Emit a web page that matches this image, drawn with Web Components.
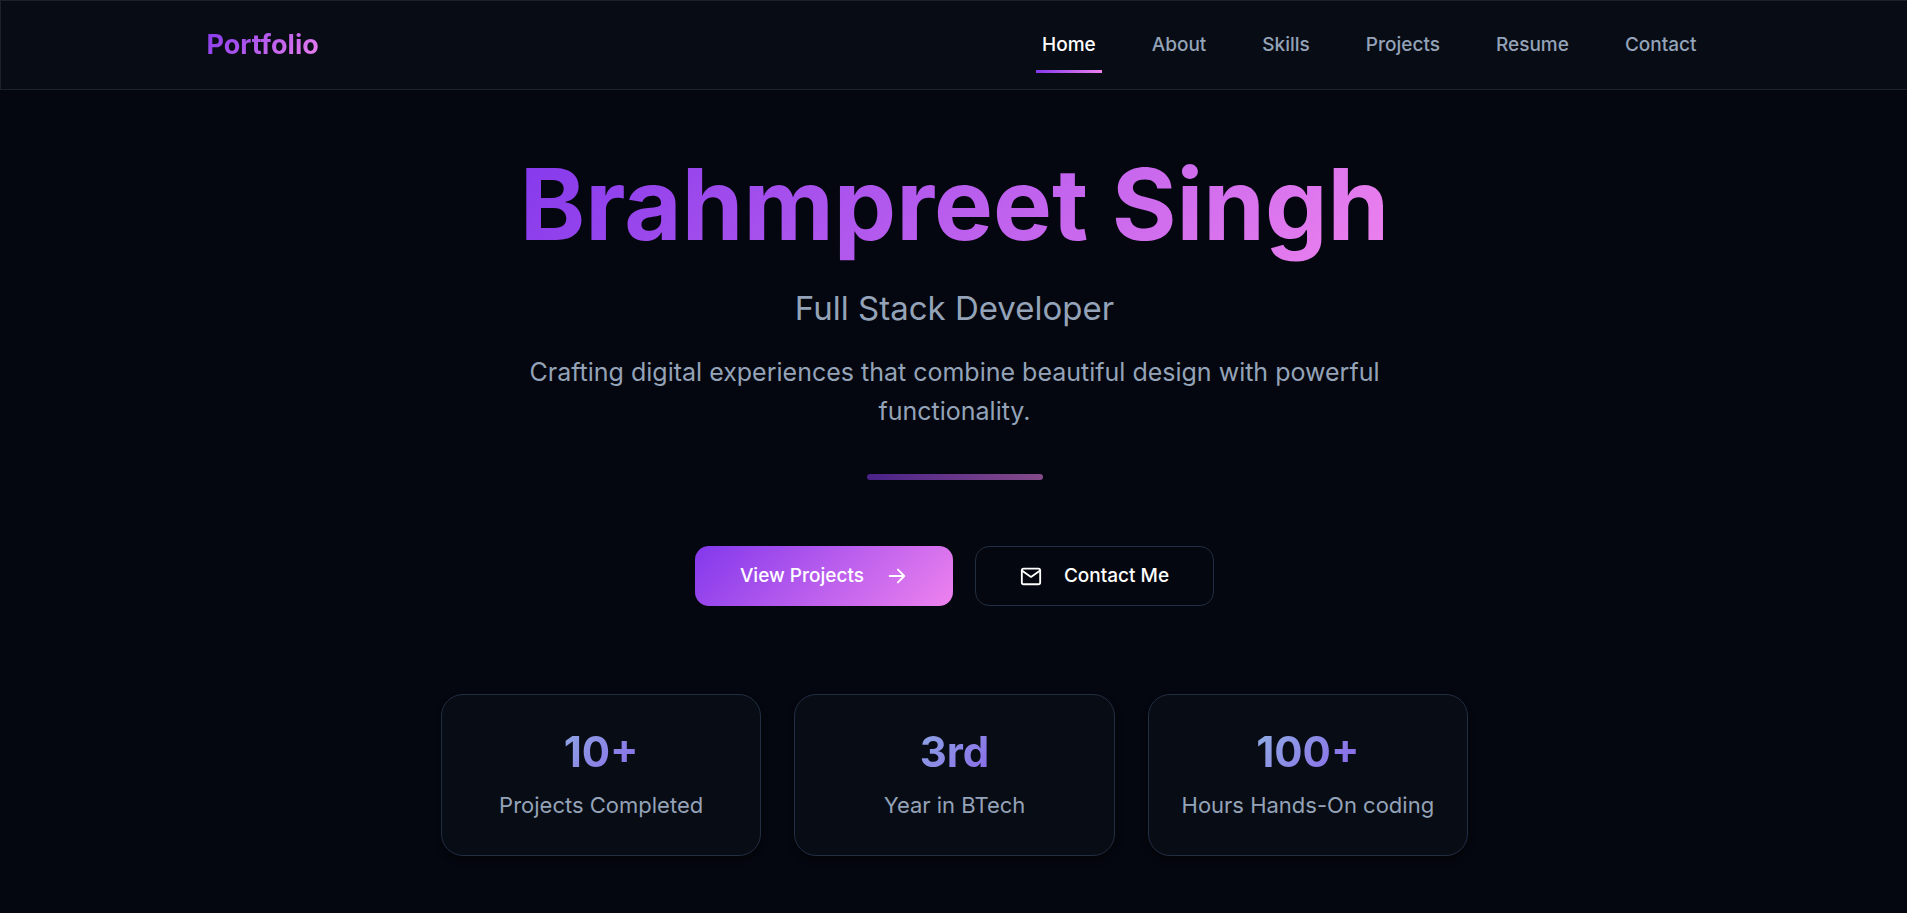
<!DOCTYPE html>
<html lang="en">
<head>
<meta charset="utf-8">
<title>Portfolio</title>
<style>
  html { background: #04070f; }
  body {
    margin: 0;
    background: #04070f;
    color: #94a3b8;
    font-family: Inter, "Liberation Sans", sans-serif;
    --accent: linear-gradient(135deg, #8338ec, #ee82ee);
    --accent-flat: linear-gradient(90deg, #8338ec, #ee82ee);
    --cool: linear-gradient(135deg, #94d8e0, #8338ec);
    --surface: #080c15;
    --line: #222e42;
    --light: #ffffff;
    --muted: #94a3b8;
  }
</style>
</head>
<body>
<site-header>
  <nav-link href="#home" current>Home</nav-link>
  <nav-link href="#about">About</nav-link>
  <nav-link href="#skills">Skills</nav-link>
  <nav-link href="#projects">Projects</nav-link>
  <nav-link href="#resume">Resume</nav-link>
  <nav-link href="#contact">Contact</nav-link>
</site-header>
<hero-section>
  <span slot="name">Brahmpreet Singh</span>
  <span slot="role">Full Stack Developer</span>
  <span slot="intro">Crafting digital experiences that combine beautiful design with powerful functionality.</span>
  <action-button slot="actions" variant="primary">View Projects
    <svg slot="after" width="22" height="22" viewBox="0 0 24 24" fill="none" stroke="currentColor" stroke-width="2" stroke-linecap="round" stroke-linejoin="round" aria-hidden="true"><path d="M4 12h16M13 5l7 7-7 7"/></svg>
  </action-button>
  <action-button slot="actions">
    <svg slot="before" width="22" height="22" viewBox="0 0 24 24" fill="none" stroke="currentColor" stroke-width="2" stroke-linecap="round" stroke-linejoin="round" aria-hidden="true"><rect x="2" y="4" width="20" height="17" rx="2"/><path d="M22 6l-10 7L2 6"/></svg>
    Contact Me
  </action-button>
  <stat-card slot="stats" value="10+">Projects Completed</stat-card>
  <stat-card slot="stats" value="3rd">Year in BTech</stat-card>
  <stat-card slot="stats" value="100+">Hours Hands-On coding</stat-card>
</hero-section>

<script>
  const define = (name, html, setup) => {
    const template = document.createElement('template');
    template.innerHTML = html;
    customElements.define(name, class extends HTMLElement {
      constructor() {
        super();
        this.attachShadow({ mode: 'open' }).append(template.content.cloneNode(true));
      }
      connectedCallback() {
        if (setup) setup(this, this.shadowRoot);
      }
    });
  };

  define('nav-link', `
    <style>
      :host { display: block; }
      a {
        display: block;
        padding: 12px 6px 9px;
        border-bottom: 3px solid transparent;
        color: var(--muted);
        font-size: 19px;
        font-weight: 500;
        line-height: 32px;
        text-decoration: none;
      }
      :host([current]) a {
        color: var(--light);
        border-image: var(--accent-flat) 1;
      }
    </style>
    <a><slot></slot></a>`, (host, root) => {
      const a = root.querySelector('a');
      a.href = host.getAttribute('href');
      if (host.hasAttribute('current')) a.setAttribute('aria-current', 'page');
    });

  define('site-header', `
    <style>
      :host { display: block; }
      header {
        background: var(--surface);
        border: 1px solid #1c222b;
        border-right: 0;
        padding-left: 1px;
      }
      .bar {
        box-sizing: border-box;
        max-width: 1540px;
        margin: 0 auto;
        padding: 16px 22px;
        display: flex;
        justify-content: space-between;
        align-items: center;
      }
      .logo {
        background: var(--accent);
        -webkit-background-clip: text;
        background-clip: text;
        color: transparent;
        font-size: 27px;
        font-weight: 700;
        line-height: 40px;
        text-decoration: none;
      }
      nav { display: flex; gap: 44px; }
    </style>
    <header>
      <div class="bar">
        <a class="logo" href="#home">Portfolio</a>
        <nav aria-label="Main"><slot></slot></nav>
      </div>
    </header>`);

  define('action-button', `
    <style>
      :host { display: block; }
      button {
        display: flex;
        align-items: center;
        gap: 22px;
        height: 60px;
        padding: 0 44px;
        border: 1px solid var(--line);
        border-radius: 14px;
        background: transparent;
        color: var(--light);
        font: 500 19px/30px Inter, "Liberation Sans", sans-serif;
        cursor: pointer;
      }
      :host([variant="primary"]) button {
        padding: 0 45px;
        border: 0;
        background: var(--accent);
      }
      ::slotted(svg) { display: block; }
    </style>
    <button type="button"><slot name="before"></slot><span><slot></slot></span><slot name="after"></slot></button>`);

  define('stat-card', `
    <style>
      :host {
        display: block;
        box-sizing: border-box;
        padding: 32px;
        border: 1px solid var(--line);
        border-radius: 22px;
        background: var(--surface);
        box-shadow: 0 4px 6px rgba(0, 0, 0, .4);
        text-align: center;
      }
      .value {
        margin: 0 0 11px;
        background: var(--cool);
        -webkit-background-clip: text;
        background-clip: text;
        color: transparent;
        font-size: 42px;
        font-weight: 700;
        line-height: 50px;
      }
      .label {
        margin: 0;
        font-size: 22px;
        line-height: 35px;
      }
    </style>
    <p class="value"></p>
    <p class="label"><slot></slot></p>`, (host, root) => {
      root.querySelector('.value').textContent = host.getAttribute('value');
    });

  define('hero-section', `
    <style>
      :host { display: block; }
      main {
        display: flex;
        flex-direction: column;
        align-items: center;
        padding: 55px 22px 55px 24px;
        text-align: center;
      }
      h1 {
        margin: 0 0 22px;
        background: var(--accent);
        -webkit-background-clip: text;
        background-clip: text;
        color: transparent;
        font-size: 99px;
        font-weight: 700;
        line-height: 119px;
      }
      .role { margin: 0 0 22px; font-size: 33px; line-height: 45px; }
      .intro { margin: 0; max-width: 880px; font-size: 25px; line-height: 39px; }
      hr {
        width: 176px;
        height: 6px;
        margin: 43px 0 66px;
        border: 0;
        border-radius: 3px;
        background: var(--accent-flat);
        opacity: .55;
      }
      .actions { display: flex; flex-wrap: wrap; justify-content: center; gap: 22px; }
      .stats {
        display: grid;
        grid-template-columns: repeat(auto-fit, minmax(280px, 1fr));
        gap: 33px;
        width: 100%;
        max-width: 1027px;
        margin-top: 88px;
      }
    </style>
    <main>
      <h1><slot name="name"></slot></h1>
      <p class="role"><slot name="role"></slot></p>
      <p class="intro"><slot name="intro"></slot></p>
      <hr>
      <div class="actions"><slot name="actions"></slot></div>
      <div class="stats"><slot name="stats"></slot></div>
    </main>`);
</script>
</body>
</html>
